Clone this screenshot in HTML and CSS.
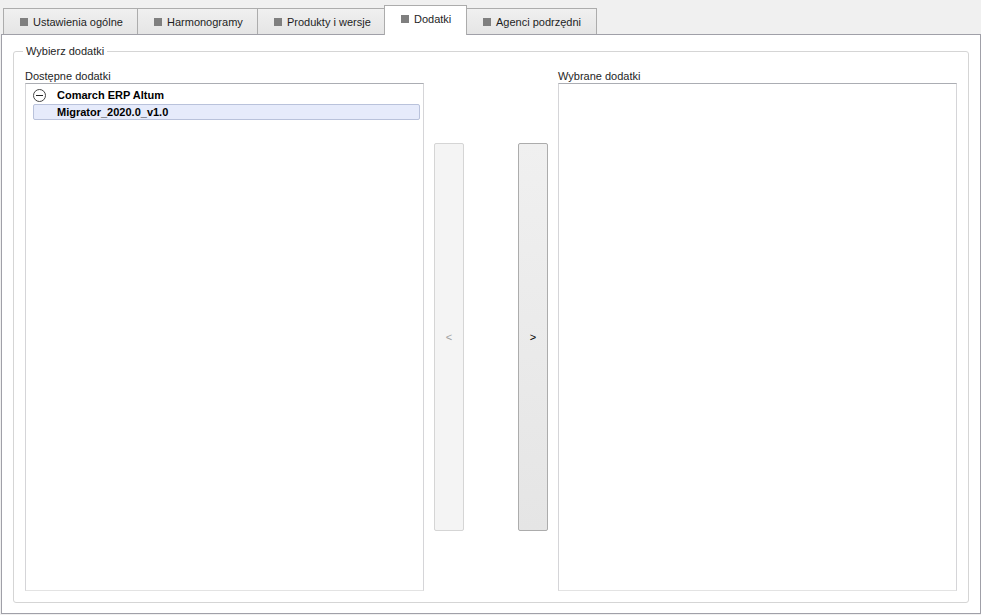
FILE: index.html
```html
<!DOCTYPE html>
<html lang="pl">

<head>
    <meta charset="utf-8">
    <title>Dodatki</title>
    <link rel="stylesheet" href="styles.css">
</head>

<body>
    <nav class="zakladki">
        <div class="zakladka"><span class="kwadrat"></span>Ustawienia ogólne</div>
        <div class="zakladka"><span class="kwadrat"></span>Harmonogramy</div>
        <div class="zakladka"><span class="kwadrat"></span>Produkty i wersje</div>
        <div class="zakladka aktywna"><span class="kwadrat"></span>Dodatki</div>
        <div class="zakladka"><span class="kwadrat"></span>Agenci podrzędni</div>
    </nav>

    <main class="panel">
        <fieldset class="grupa">
            <legend>Wybierz dodatki</legend>

            <div class="uklad">
                <label class="etykieta">Dostępne dodatki</label>
                <span></span>
                <span></span>
                <label class="etykieta">Wybrane dodatki</label>

                <div class="lista">
                    <div class="wezel">
                        <span class="zwin"></span>
                        <b>Comarch ERP Altum</b>
                    </div>
                    <div class="element wybrany"><b>Migrator_2020.0_v1.0</b></div>
                </div>

                <button class="przycisk" disabled>&lt;</button>
                <button class="przycisk">&gt;</button>

                <div class="lista"></div>
            </div>
        </fieldset>
    </main>
</body>

</html>
```

FILE: styles.css
```css
html,
body {
    margin: 0;
    height: 100%;
}

body {
    background: #f0f0f0;
    font-family: "Liberation Sans", Arial, sans-serif;
    font-size: 11px;
    color: #000;
    display: flex;
    flex-direction: column;
}

/* zakladki */

.zakladki {
    display: flex;
    align-items: flex-end;
    height: 34px;
    padding-left: 3px;
    box-sizing: border-box;
}

.zakladka {
    height: 26px;
    box-sizing: border-box;
    border: 1px solid #acacac;
    border-bottom: none;
    margin-right: -1px;
    background: linear-gradient(#f0f0f0, #e5e5e5);
    display: flex;
    align-items: center;
    padding: 0 0 0 16px;
    color: #1e1e1e;
    white-space: nowrap;
}

.zakladka:nth-child(1) { width: 135px; }
.zakladka:nth-child(2) { width: 121px; }
.zakladka:nth-child(3) { width: 128px; }
.zakladka:nth-child(5) { width: 131px; }

.zakladka.aktywna {
    width: 83px;
    background: #fff;
    position: relative;
    z-index: 1;
    margin-bottom: -1px;
    height: 30px;
    padding-bottom: 4px;
}

.kwadrat {
    width: 8px;
    height: 8px;
    background: #7f7f7f;
    margin-right: 5px;
    flex: none;
}

/* panel */

.panel {
    flex: 1;
    margin: 0 0 1px 1px;
    background: #fff;
    border: 1px solid #a0a0a8;
    padding: 10px 11px 10px 11px;
    display: flex;
}

.grupa {
    flex: 1;
    margin: 0;
    border: 1px solid #d5d5d5;
    border-radius: 3px;
    padding: 11px 11px 11px 11px;
    display: flex;
    flex-direction: column;
    min-width: 0;
}

.grupa legend {
    padding: 0 3px;
    margin-left: -2px;
    line-height: 13px;
    color: #1e1e1e;
}

.uklad {
    flex: 1;
    display: grid;
    grid-template-columns: 399px 30px 30px 399px;
    grid-template-rows: 14px 1fr;
    column-gap: 10px;
}

.uklad > :nth-child(3) {
    grid-column: 3;
}

.przycisk:nth-of-type(2) {
    margin-left: 44px;
}

.etykieta {
    line-height: 14px;
    color: #1e1e1e;
}

.uklad > .etykieta:nth-child(4) {
    margin-left: 44px;
    width: 399px;
}

.uklad > .lista:last-child {
    margin-left: 44px;
    width: 399px;
}

.lista {
    box-sizing: border-box;
    border: 1px solid #e3e3e3;
    border-top-color: #abadb3;
    border-left-color: #d5d5d8;
    border-right-color: #d5d5d8;
    padding: 2px 2px;
}

.wezel {
    display: flex;
    align-items: center;
    height: 18px;
    padding-left: 5px;
}

.zwin {
    width: 11px;
    height: 11px;
    border: 1px solid #444;
    border-radius: 50%;
    margin-right: 11px;
    position: relative;
    flex: none;
}

.zwin::after {
    content: "";
    position: absolute;
    left: 2px;
    right: 2px;
    top: 5px;
    height: 1px;
    background: #222;
}

.element {
    height: 16px;
    box-sizing: border-box;
    margin: 0 1px 0 5px;
    padding-left: 23px;
    line-height: 14px;
}

.wybrany {
    background: #e6ebfb;
    border: 1px solid #b9c2db;
    border-radius: 2px;
}

.przycisk {
    margin: 60px 0;
    width: 30px;
    font: inherit;
    font-size: 11px;
    border: 1px solid #acacac;
    border-radius: 2px;
    background: linear-gradient(#f0f0f0, #e5e5e5);
    color: #000;
    padding: 0;
}

.przycisk:disabled {
    border-color: #d5d5d5;
    background: #f4f4f4;
    color: #a0a0a0;
}
```
